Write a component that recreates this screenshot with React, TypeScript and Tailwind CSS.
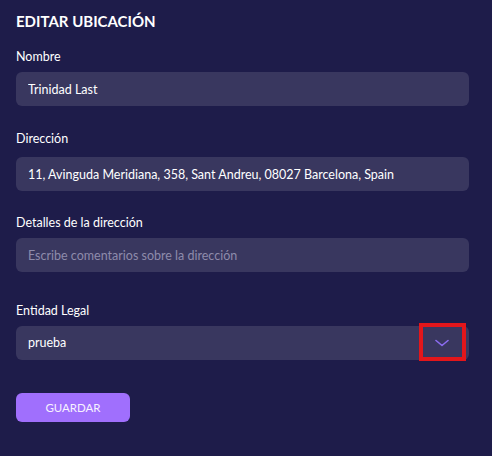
const font = { fontFamily: "Lato, 'Noto Sans', sans-serif" };

function Field({
  label,
  children,
  className = "",
  gap = "mt-[7px]",
}: {
  label: string;
  children: React.ReactNode;
  className?: string;
  gap?: string;
}) {
  return (
    <div className={className}>
      <label className="block text-[12.5px] leading-4 text-white">{label}</label>
      <div className={gap}>{children}</div>
    </div>
  );
}

const inputCls =
  "block w-full h-[34px] rounded-md bg-[#39375f] px-3 text-[12.5px] text-white placeholder:text-[#8e8bab] outline-none";

export default function App() {
  return (
    <div className="min-h-[456px] w-full bg-[#1e1c4a] px-4 pt-[9px]" style={font}>
      <h1 className="text-[15px] font-bold leading-6 text-white">EDITAR UBICACIÓN</h1>

      <div className="mt-4 w-[453px]">
        <Field label="Nombre">
          <input className={inputCls} defaultValue="Trinidad Last" />
        </Field>

        <Field label="Dirección" className="mt-[25px]" gap="mt-[10px]">
          <input
            className={inputCls}
            defaultValue="11, Avinguda Meridiana, 358, Sant Andreu, 08027 Barcelona, Spain"
          />
        </Field>

        <Field label="Detalles de la dirección" className="mt-6">
          <input className={inputCls} placeholder="Escribe comentarios sobre la dirección" />
        </Field>

        <Field label="Entidad Legal" className="mt-[31px]">
          <div className="relative flex h-[34px] items-center rounded-md bg-[#39375f] px-3">
            <span className="text-[12.5px] text-white">prueba</span>
            <svg
              viewBox="0 0 14 8"
              className="ml-auto mr-[8px] h-[8px] w-[14px]"
              fill="none"
              stroke="#8b6cf0"
              strokeWidth="1.6"
              strokeLinecap="round"
              strokeLinejoin="round"
            >
              <path d="M1 1.5 L7 6.5 L13 1.5" />
            </svg>
            <div className="absolute right-[3px] top-[-3px] h-[38px] w-[47px] border-4 border-[#e3161b]" />
          </div>
        </Field>
      </div>

      <button className="mt-[33px] h-[29px] w-[114px] rounded-md bg-[#a06ffd] text-[11.5px] text-[#f7f2ff]">
        GUARDAR
      </button>
    </div>
  );
}
